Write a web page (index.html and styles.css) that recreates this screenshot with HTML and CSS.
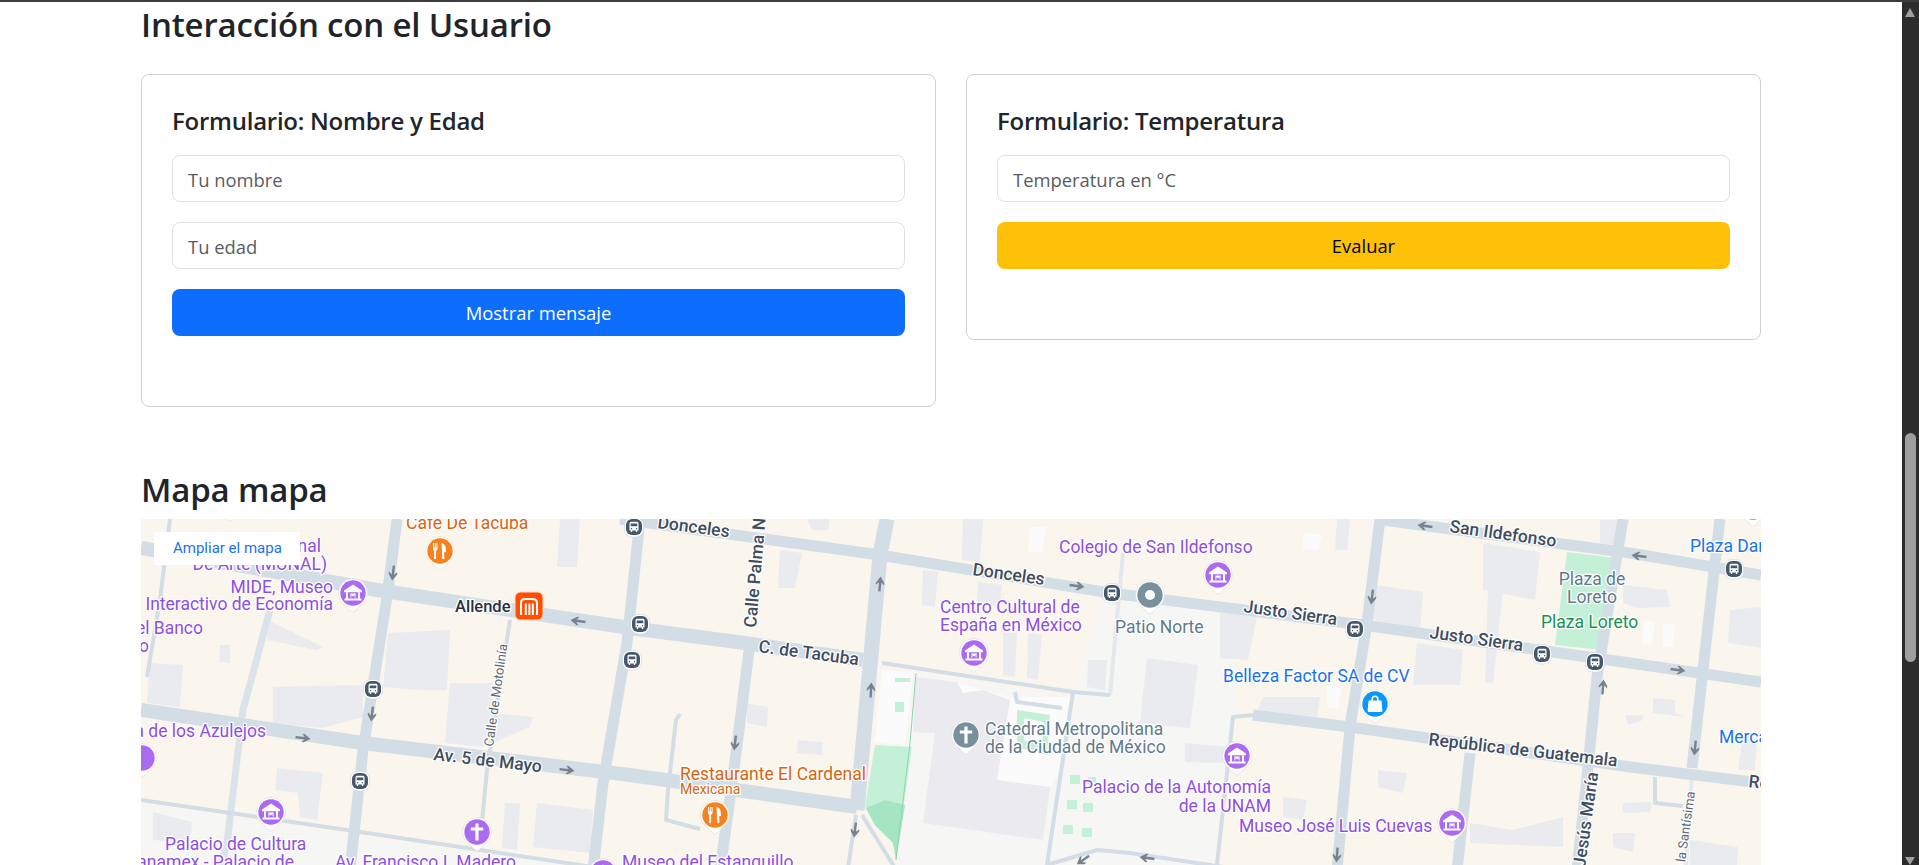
FILE: index.html
```html
<!DOCTYPE html>
<html lang="es">
  <head>
    <meta charset="UTF-8" />
    <meta name="viewport" content="width=device-width, initial-scale=1.0" />
    <title>Interacción con el Usuario</title>
    <link rel="stylesheet" href="styles.css">
  </head>
  <body>
    <div class="top-line"></div>
    <div class="window">
      <main class="page">
        <!-- Formularios -->
        <section class="forms-section">
          <h2>Interacción con el Usuario</h2>
          <div class="forms-grid">
            <div class="form-card">
              <h4>Formulario: Nombre y Edad</h4>
              <form class="user-form">
                <input type="text" placeholder="Tu nombre" />
                <input type="number" placeholder="Tu edad" />
                <button type="button" class="btn btn-blue">Mostrar mensaje</button>
              </form>
            </div>
            <div class="form-card">
              <h4>Formulario: Temperatura</h4>
              <form class="user-form">
                <input type="number" placeholder="Temperatura en °C" />
                <button type="button" class="btn btn-yellow">Evaluar</button>
              </form>
            </div>
          </div>
        </section>

        <!-- Mapa -->
        <section class="map-section">
          <h2>Mapa mapa</h2>
          <div class="map-frame">
            <svg class="map" viewBox="141 519 1620 346" width="1620" height="346" role="img" aria-label="Mapa del centro de la Ciudad de México">
              <defs>
                <g id="pin">
                  <path class="pin-halo" d="M-10.5 10A14.5 14.5 0 1 1 10.5 10L2 18Q0 20-2 18Z" />
                  <circle r="12.7" />
                </g>
                <g id="i-museum" class="ico">
                  <path d="M-9-2.5L0-8.5 9-2.5V-.8H-9Z" />
                  <path d="M-7-.8H-5V5.6H5V-.8H7V5.6H8.5V7.6H-8.5V5.6H-7Z" />
                  <path d="M-2.6 .6H2.6V4.4H1.6V2L0 3.6-1.6 2V4.4H-2.6Z" />
                </g>
                <g id="i-food" class="ico">
                  <path d="M-7-8H-6V-3.5H-5.2V-8H-4.2V-3.5H-3.4V-8H-2.4V-2.4Q-2.4-.6-3.9-.2V8H-5.9V-.2Q-7.4-.6-7-2.4Z" />
                  <path d="M2-8Q6.5-7 6.5-1V1H4.8V8H2.8Z" transform="translate(-.5 0)" />
                </g>
                <g id="i-cross" class="ico">
                  <path d="M-1.6-8.5H1.6V-4.6H6.2V-1.6H1.6V8.5H-1.6V-1.6H-6.2V-4.6H-1.6Z" />
                </g>
                <g id="i-bag" class="ico">
                  <path d="M-3.6-3.6V-5A3.6 3.6 0 0 1 3.6-5V-3.6H6.4L7.4 6.5Q7.4 8 6 8H-6Q-7.4 8-7.4 6.5L-6.4-3.6ZM-2-3.6H2V-5A2 2 0 0 0-2-5Z" fill-rule="evenodd" />
                </g>
                <g id="bus">
                  <rect class="bus-halo" x="-9.5" y="-9.5" width="19" height="19.5" rx="7.5" />
                  <rect class="bus-bg" x="-8" y="-8" width="16" height="16" rx="6" />
                  <path class="ico" d="M-4.5-3.6Q-4.5-5.2-3-5.2H3Q4.5-5.2 4.5-3.6V3.4H3.2V5H1.8V3.4H-1.8V5H-3.2V3.4H-4.5ZM-3.3-3.6V-.8H3.3V-3.6ZM-3.1 1V2.2H-1.9V1ZM1.9 1V2.2H3.1V1Z" fill-rule="evenodd" />
                </g>
                <path id="arrow" d="M-7.5-1.2H1.6L-1.2-4.2H1.2L7.5 0 1.2 4.2H-1.2L1.6 1.2H-7.5Z" />
              </defs>

              <rect class="ground" x="141" y="519" width="1620" height="346" />
              <polygon class="plain" points="141,803 347,835 600,870 141,870" />
              <polygon class="plain" points="1103,600 1235,610 1235,725 1217,865 1050,865 1073,692" />
              <polygon class="plain" points="913,673 1073,697 1050,865 893,865" />

              <!-- edificios -->
              <g class="blocks">
                <polygon points="273,687 363,685 363,717 322,728 273,723" />
                <polygon points="388,633 450,630 447,690 420,690 383,687" />
                <polygon points="450,683 493,683 490,713 533,717 530,727 483,747 445,743" />
                <polygon points="150,663 183,665 180,707 147,703" />
                <polygon points="268,620 323,647 317,650 267,640" />
                <polygon points="220,645 230,645 230,663 219,662" />
                <polygon points="560,519 580,519 577,567 557,567" />
                <polygon points="277,768 323,773 317,820 300,817 298,793 275,790" />
                <polygon points="505,803 520,803 517,850 502,848" />
                <polygon points="537,803 593,810 590,853 533,847" />
                <polygon points="153,812 192,822 190,843 153,840" />
                <polygon points="747,703 768,707 767,727 747,723" />
                <polygon points="798,740 823,742 822,755 797,753" />
                <polygon points="780,550 802,553 795,588 778,588" />
                <polygon points="923,570 938,572 935,607 922,605" />
                <polygon points="963,519 983,519 980,562 962,560" />
                <polygon points="978,582 1002,585 1000,607 977,603" />
                <polygon points="1003,633 1017,633 1015,677 1003,675" />
                <polygon points="1028,633 1042,635 1038,680 1027,678" />
                <polygon points="1088,660 1107,660 1105,690 1087,687" />
                <polygon points="807,519 830,519 828,530 812,530" />
                <polygon points="1220,613 1257,617 1248,660 1220,658" />
                <polygon points="1147,658 1198,665 1190,728 1140,723" />
                <polygon points="1263,697 1320,697 1317,717 1258,710" />
                <polygon points="1377,585 1423,592 1420,630 1373,620" />
                <polygon points="1417,643 1463,650 1460,685 1413,685" />
                <polygon points="1483,543 1540,552 1535,600 1483,590" />
                <polygon points="1488,590 1503,590 1493,683 1485,682" />
                <polygon points="1378,770 1407,773 1403,793 1378,787" />
                <polygon points="1470,823 1513,830 1563,817 1563,847 1470,843" />
                <polygon points="1185,743 1227,747 1223,763 1185,762" />
                <polygon points="1283,797 1307,800 1303,820 1283,817" />
                <polygon points="1337,519 1350,519 1347,550 1335,550" />
                <polygon points="1623,585 1667,590 1670,607 1637,608 1623,603" />
                <polygon points="1653,698 1675,700 1675,713 1685,717 1653,713" />
                <polygon points="1625,715 1643,715 1643,720 1628,725" />
                <polygon points="1730,610 1761,607 1761,648 1728,643" />
                <polygon points="1743,737 1757,737 1755,770 1738,770" />
                <polygon points="1690,840 1738,847 1737,865 1690,865" />
                <polygon points="1623,803 1652,802 1650,812 1623,813" />
                <polygon points="1613,833 1635,833 1633,852 1613,847" />
                <polygon points="1600,520 1617,520 1615,545 1600,543" />
              </g>
              <g class="patches">
                <polygon points="957,683 1010,697 1070,697 1060,770 1050,788 997,780" />
                <polygon points="882,670 913,673 905,745 875,742" />
                <polygon points="1327,685 1342,687 1338,708 1327,707" />
                <polygon points="1030,527 1047,527 1042,552 1028,552" />
                <polygon points="1303,533 1322,535 1318,550 1303,548" />
                <polygon points="1643,620 1655,622 1652,645 1642,643" />
                <polygon points="1663,623 1675,625 1672,648 1663,646" />
              </g>
              <polygon class="cathedral" points="915,677 957,682 963,693 983,690 1010,700 997,780 1050,787 1043,840 923,823 935,733 913,732" />

              <!-- parques -->
              <g class="park">
                <polygon points="875,745 912,747 896,860 893,843 875,825 865,807" />
                <polygon points="1567,552 1615,558 1603,650 1555,645" />
                <polygon points="1017,710 1050,715 1047,755 1017,747" />
                <rect x="895" y="702" width="9" height="10" />
                <rect x="895" y="678" width="15" height="4" />
                <rect x="1070" y="775" width="10" height="9" />
                <rect x="1067" y="800" width="10" height="9" />
                <rect x="1083" y="803" width="10" height="9" />
                <rect x="1063" y="825" width="10" height="9" />
                <rect x="1082" y="828" width="10" height="9" />
                <rect x="1088" y="777" width="8" height="8" />
              </g>
              <polygon class="park-dark" points="866,808 885,800 905,805 896,860 893,843 875,825" />
              <polygon class="patches" points="1024,718 1044,722 1042,745 1024,740" />
              <polyline class="park-line" points="916,673 910,743 896,860" />

              <!-- calles -->
              <g class="roads">
                <polyline class="r-thin" points="170,519 160,600 147,677" />
                <polyline class="r-side" points="270,610 243,710 227,843 220,870" />
                <polyline class="r-thin" points="510,620 487,770 480,843" />
                <polyline class="r-thin" points="141,800 347,830 600,868" />
                <polyline class="r-pale" points="1123,553 1110,695" />
                <polyline class="r-thin" points="1073,692 1047,865" />
                <polyline class="r-thin" points="882,663 1073,692 1110,695" />
                <polyline class="r-thin" points="1015,692 1017,702 1062,708" />
                <polyline class="r-thin" points="1253,715 1233,717 1217,865" />
                <polyline class="r-thin" points="680,714 676,720 668,790 666,820 700,829" />
                <polyline class="r-thin" points="1655,777 1655,803 1683,806" />
                <polyline class="r-pale" points="1692,777 1686,865" />
                <polyline class="r-thin" points="1047,865 1097,850 1130,853 1230,868" />
                <polyline class="r-thin" points="862,815 895,868" />
                <polyline class="r-thin" points="856,815 848,868" />
                <polyline class="r-main" points="141,548 377,590 630,628 745,643 863,660" />
                <polyline class="r-main" points="141,710 363,743 630,775 857,807" />
                <polyline class="r-mid" points="620,519 880,555 1110,593 1363,625 1630,663 1761,682" />
                <polyline class="r-mid" points="1383,520 1630,553 1761,575" />
                <polyline class="r-mid" points="1253,715 1350,727 1630,767 1761,783" />
                <polyline class="r-mid" points="397,519 387,597 363,750 350,870" />
                <polyline class="r-mid" points="640,519 627,643 603,783 593,870" />
                <polyline class="r-mid" points="750,643 733,777 720,870" />
                <polyline class="r-wide" points="887,519 880,555 870,667 857,810" />
                <polyline class="r-mid" points="1380,519 1367,623 1350,727 1337,870" />
                <polyline class="r-mid" points="1623,519 1597,677 1587,777 1577,870" />
                <polyline class="r-mid" points="1470,753 1457,870" />
                <polyline class="r-mid" points="1720,519 1703,670 1692,768" />
              </g>

              <!-- sentido -->
              <g class="arrows">
                <use href="#arrow" transform="translate(393 573) rotate(97)" />
                <use href="#arrow" transform="translate(578 621) rotate(188)" />
                <use href="#arrow" transform="translate(372 714) rotate(97)" />
                <use href="#arrow" transform="translate(303 738) rotate(7)" />
                <use href="#arrow" transform="translate(567 770) rotate(7)" />
                <use href="#arrow" transform="translate(880 584) rotate(-85)" />
                <use href="#arrow" transform="translate(1077 586) rotate(8)" />
                <use href="#arrow" transform="translate(871 690) rotate(-87)" />
                <use href="#arrow" transform="translate(735 743) rotate(97)" />
                <use href="#arrow" transform="translate(855 830) rotate(97)" />
                <use href="#arrow" transform="translate(1083 860) rotate(145)" />
                <use href="#arrow" transform="translate(1425 526) rotate(188)" />
                <use href="#arrow" transform="translate(1372 597) rotate(97)" />
                <use href="#arrow" transform="translate(1603 687) rotate(-85)" />
                <use href="#arrow" transform="translate(1337 855) rotate(95)" />
                <use href="#arrow" transform="translate(1147 858) rotate(188)" />
                <use href="#arrow" transform="translate(1639 556) rotate(188)" />
                <use href="#arrow" transform="translate(1678 670) rotate(8)" />
                <use href="#arrow" transform="translate(1695 748) rotate(96)" />
              </g>

              <!-- nombres de calles -->
              <g class="lbl lbl-road">
                <text transform="translate(433 760) rotate(6.5)">Av. 5 de Mayo</text>
                <text transform="translate(657 528) rotate(7.5)">Donceles</text>
                <text transform="translate(972 575) rotate(8)">Donceles</text>
                <text transform="translate(758 652) rotate(7.5)">C. de Tacuba</text>
                <text transform="translate(756 628) rotate(-85)">Calle Palma Norte</text>
                <text transform="translate(1449 532) rotate(8)">San Ildefonso</text>
                <text transform="translate(1243 612) rotate(8)">Justo Sierra</text>
                <text transform="translate(1429 638) rotate(8)">Justo Sierra</text>
                <text transform="translate(1428 745) rotate(6.5)">República de Guatemala</text>
                <text transform="translate(1748 787) rotate(6.5)">República de Guatemala</text>
                <text transform="translate(1585 868) rotate(-82)">Jesús María</text>
              </g>
              <g class="lbl lbl-street">
                <text transform="translate(493 747) rotate(-82)">Calle de Motolinía</text>
                <text class="end" transform="translate(1695 792) rotate(-82)">de la Santísima</text>
              </g>

              <!-- marcadores -->
              <g class="pin-purple">
                <use href="#pin" x="230" y="502" />
                <use href="#i-museum" x="230" y="502" />
                <use href="#pin" x="353" y="593" />
                <use href="#i-museum" x="353" y="593" />
                <use href="#pin" x="271" y="812" />
                <use href="#i-museum" x="271" y="812" />
                <use href="#pin" x="477" y="832" />
                <use href="#i-cross" x="477" y="832" />
                <use href="#pin" x="142" y="758" />
                <use href="#pin" x="603" y="873" />
                <use href="#i-museum" x="603" y="873" />
                <use href="#pin" x="974" y="653" />
                <use href="#i-museum" x="974" y="653" />
                <use href="#pin" x="1218" y="575" />
                <use href="#i-museum" x="1218" y="575" />
                <use href="#pin" x="1237" y="756" />
                <use href="#i-museum" x="1237" y="756" />
                <use href="#pin" x="1452" y="823" />
                <use href="#i-museum" x="1452" y="823" />
              </g>
              <g class="pin-orange">
                <use href="#pin" x="440" y="551" />
                <use href="#i-food" x="440" y="551" />
                <use href="#pin" x="715" y="815" />
                <use href="#i-food" x="715" y="815" />
              </g>
              <g class="pin-slate">
                <use href="#pin" x="966" y="735" />
                <use href="#i-cross" x="966" y="735" />
                <use href="#pin" x="1150" y="595" />
                <circle class="ico" cx="1150" cy="595" r="5" />
              </g>
              <g class="pin-blue">
                <use href="#pin" x="1375" y="704" />
                <use href="#i-bag" x="1375" y="704" />
                <use href="#pin" x="1753" y="507" />
              </g>

              <use href="#bus" x="373" y="689" />
              <use href="#bus" x="360" y="781" />
              <use href="#bus" x="634" y="527" />
              <use href="#bus" x="640" y="624" />
              <use href="#bus" x="632" y="660" />
              <use href="#bus" x="1112" y="593" />
              <use href="#bus" x="1355" y="629" />
              <use href="#bus" x="1542" y="654" />
              <use href="#bus" x="1595" y="662" />
              <use href="#bus" x="1734" y="569" />

              <g transform="translate(529 606)">
                <rect class="metro-bg" x="-14" y="-14" width="28" height="28" rx="5.5" />
                <path class="metro-arch" d="M-8 9V-3Q-8-7-4-7H3Q8-7 8-3V9M-3.2 9V-2.6M.4 9V-2.6M3.8 9V-2.6" />
              </g>

              <!-- nombres de lugares -->
              <g class="lbl lbl-purple">
                <text class="end" x="321" y="552">Museo Nacional</text>
                <text class="end" x="327" y="570">De Arte (MUNAL)</text>
                <text class="end" x="333" y="593">MIDE, Museo</text>
                <text class="end" x="333" y="610">Interactivo de Economía</text>
                <text class="end" x="203" y="634">Museo del Banco</text>
                <text class="end" x="149" y="652">de México</text>
                <text class="end" x="266" y="737">Casa de los Azulejos</text>
                <text x="165" y="850">Palacio de Cultura</text>
                <text class="end" x="294" y="868">Banamex - Palacio de</text>
                <text x="335" y="868">Av. Francisco I. Madero</text>
                <text x="622" y="868">Museo del Estanquillo</text>
                <text x="1059" y="553">Colegio de San Ildefonso</text>
                <text x="940" y="613">Centro Cultural de</text>
                <text x="940" y="631">España en México</text>
                <text class="end" x="1271" y="793">Palacio de la Autonomía</text>
                <text class="end" x="1271" y="812">de la UNAM</text>
                <text x="1239" y="832">Museo José Luis Cuevas</text>
              </g>
              <g class="lbl lbl-orange">
                <text x="406" y="529">Café De Tacuba</text>
                <text x="680" y="780">Restaurante El Cardenal</text>
                <text class="small" x="680" y="794">Mexicana</text>
              </g>
              <g class="lbl lbl-blue">
                <text x="1223" y="682">Belleza Factor SA de CV</text>
                <text x="1690" y="552">Plaza Dana</text>
                <text x="1719" y="743">Mercado</text>
              </g>
              <g class="lbl lbl-slate">
                <text x="1115" y="633">Patio Norte</text>
                <text x="985" y="735">Catedral Metropolitana</text>
                <text x="985" y="753">de la Ciudad de México</text>
                <text class="mid" x="1592" y="585">Plaza de</text>
                <text class="mid" x="1592" y="603">Loreto</text>
              </g>
              <text class="lbl lbl-green" x="1541" y="628">Plaza Loreto</text>
              <text class="lbl lbl-dark" x="455" y="612">Allende</text>
            </svg>
            <a class="map-link" href="#">Ampliar el mapa</a>
          </div>
        </section>
      </main>

      <!-- barra de scroll -->
      <div class="scrollbar">
        <span class="scroll-up"></span>
        <span class="scroll-thumb"></span>
        <span class="scroll-down"></span>
      </div>
    </div>
  </body>
</html>
```

FILE: styles.css
```css
/* General */
html,
body {
  height: 100%;
}

body {
  margin: 0;
  overflow: hidden;
  background: white;
  color: #212529;
  font-family: "Open Sans", "Noto Sans", sans-serif;
  display: flex;
  flex-direction: column;
}

.top-line {
  height: 2px;
  flex: none;
  background: #3c3c3c;
}

.window {
  flex: 1;
  display: flex;
  min-height: 0;
}

.page {
  flex: 1;
  min-width: 0;
  overflow: hidden;
}

h2 {
  margin: 0;
  font-size: 33px;
  font-weight: 600;
  line-height: 38px;
  letter-spacing: -0.17px;
}

h4 {
  margin: 0 0 18px;
  font-size: 24px;
  font-weight: 600;
  line-height: 32px;
  letter-spacing: -0.25px;
}

/* Forms */
.forms-section,
.map-section {
  width: 1620px;
  margin: 0 auto;
}

.forms-section {
  padding-top: 4px;
}

.forms-grid {
  display: grid;
  grid-template-columns: 1fr 1fr;
  gap: 30px;
  align-items: start;
  margin-top: 30px;
}

.form-card {
  border: 1px solid #ced0d3;
  border-radius: 8px;
  padding: 30px 30px 0;
}

.user-form {
  display: flex;
  flex-direction: column;
  gap: 20px;
  padding-bottom: 70px;
}

.user-form input {
  height: 47px;
  box-sizing: border-box;
  padding: 1px 15px 0;
  border: 1px solid #dee2e6;
  border-radius: 8px;
  background: white;
  font-family: inherit;
  font-size: 18.4px;
  outline: none;
}

.user-form input::placeholder {
  color: #595c5f;
  opacity: 1;
}

.btn {
  height: 47px;
  border: none;
  border-radius: 8px;
  font-family: inherit;
  font-size: 18.4px;
  cursor: pointer;
}

.btn-blue {
  background: #0d6efd;
  color: white;
}

.btn-yellow {
  background: #ffc107;
  color: black;
}

/* Map */
.map-section {
  margin-top: 60px;
}

.map-section h2 {
  line-height: 46px;
  margin-bottom: 6px;
}

.map-frame {
  position: relative;
  height: 346px;
  overflow: hidden;
}

.map {
  display: block;
}

.map-link {
  position: absolute;
  top: 13px;
  left: 13px;
  width: 146px;
  height: 33px;
  padding-left: 19px;
  box-sizing: border-box;
  background: white;
  border-radius: 2px;
  font-family: Roboto, sans-serif;
  font-size: 15px;
  line-height: 33px;
  color: #1a73e8;
  text-decoration: none;
}

.ground {
  fill: #faf6ee;
}

.plain {
  fill: #f6f6f5;
}

.blocks polygon {
  fill: #e9ebef;
}

.patches,
.patches polygon {
  fill: #fbfbfb;
}

.cathedral {
  fill: #ebebef;
}

.park polygon,
.park rect {
  fill: #c4f0d7;
}

.park-dark {
  fill: #a6e5c1;
}

.park-line {
  fill: none;
  stroke: #86d9ab;
  stroke-width: 1;
}

.roads polyline {
  fill: none;
  stroke: #d3dde6;
  stroke-linejoin: round;
}

.roads .r-wide {
  stroke-width: 15px;
}

.roads .r-main {
  stroke-width: 14px;
}

.roads .r-mid {
  stroke-width: 11px;
}

.roads .r-side {
  stroke: #dbe3ea;
  stroke-width: 7px;
}

.roads .r-thin {
  stroke-width: 4px;
}

.roads .r-pale {
  stroke: #e3e8ed;
  stroke-width: 4px;
}

.arrows {
  fill: #76838f;
}

.pin-halo {
  fill: white;
  stroke: #d4d4d4;
  stroke-width: 0.5;
}

.ico {
  fill: white;
}

.pin-purple {
  fill: #ab6af0;
}

.pin-orange {
  fill: #f5811f;
}

.pin-slate {
  fill: #78909c;
}

.pin-blue {
  fill: #0d97f5;
}

.bus-halo {
  fill: white;
  stroke: #c5ccd2;
  stroke-width: 0.5;
}

.bus-bg {
  fill: #45586b;
}

.metro-bg {
  fill: #ff4f00;
  stroke: #ffd9c8;
  stroke-width: 1;
}

.metro-arch {
  fill: none;
  stroke: white;
  stroke-width: 2;
}

/* Map labels */
.lbl text,
text.lbl {
  font-family: Roboto, sans-serif;
  font-size: 17.5px;
  paint-order: stroke;
  stroke: white;
  stroke-width: 2.5px;
  stroke-linejoin: round;
}

.lbl .end {
  text-anchor: end;
}

.lbl .mid {
  text-anchor: middle;
}

.lbl .small {
  font-size: 14px;
}

.lbl-purple {
  fill: #8e4ee0;
}

.lbl-orange {
  fill: #d9640f;
}

.lbl-blue {
  fill: #1a73e8;
}

.lbl-slate {
  fill: #5f7a89;
}

.lbl-green {
  fill: #15924f;
}

text.lbl-dark {
  fill: #2a2f35;
  font-size: 16.5px;
  font-weight: 500;
}

.lbl-road text {
  fill: #3f4d5e;
  font-size: 17.5px;
  font-weight: 500;
}

.lbl-street text {
  fill: #5c6874;
  font-size: 13px;
}

/* Scrollbar */
.scrollbar {
  width: 17px;
  flex: none;
  position: relative;
  background: #2c2c2c;
}

.scroll-thumb {
  position: absolute;
  top: 431px;
  left: 3px;
  width: 11px;
  height: 229px;
  border-radius: 6px;
  background: #9f9f9f;
}

.scroll-up,
.scroll-down {
  position: absolute;
  left: 3px;
  border-left: 5.5px solid transparent;
  border-right: 5.5px solid transparent;
}

.scroll-up {
  top: 6px;
  border-bottom: 9px solid #9f9f9f;
}

.scroll-down {
  bottom: 0;
  border-top: 8px solid #9f9f9f;
}
```
